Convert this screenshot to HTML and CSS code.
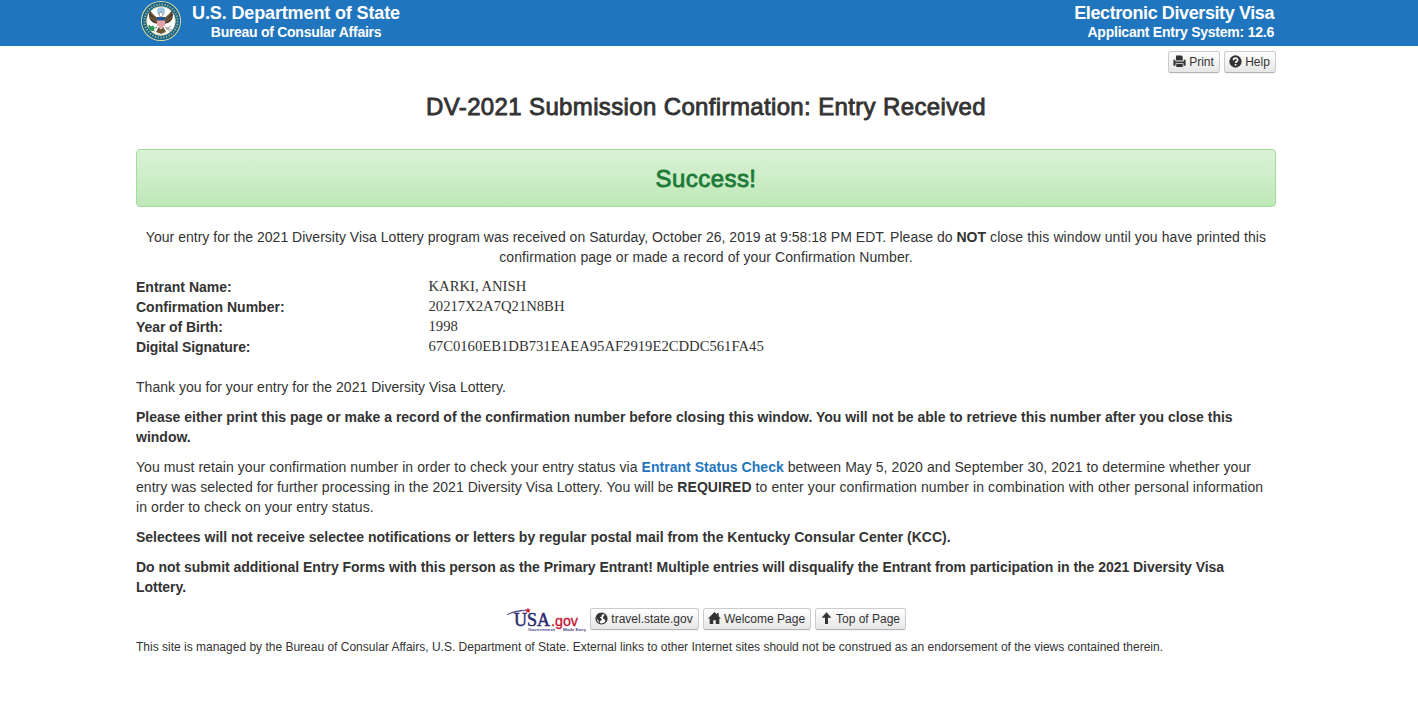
FILE: index.html
```html
<!DOCTYPE html>
<html lang="en">
<head>
<meta charset="utf-8">
<title>DV-2021 Submission Confirmation</title>
<link rel="stylesheet" href="styles.css">
</head>
<body>
<header class="banner">
  <div class="container banner-inner">
    <svg class="seal" viewBox="0 0 42 42" aria-hidden="true">
      <circle cx="21" cy="21" r="20" fill="#e9e29a"/>
      <circle cx="21" cy="21" r="19.1" fill="#0f5f92"/>
      <circle cx="21" cy="21" r="16.6" fill="none" stroke="#94b080" stroke-width="2.2" stroke-dasharray="1.4 1.4"/>
      <circle cx="21" cy="21" r="14.4" fill="#fff" stroke="#d6cd85" stroke-width=".7"/>
      <circle cx="21" cy="11.3" r="4" fill="#9cc8e8"/>
      <path d="M19 14q2-4 4 0l-1 3h-2z" fill="#fff" stroke="#77603b" stroke-width=".6"/>
      <path d="M18 18C14 16 12 12 10 11c-2 4-1 10 4 12l4 1zM24 18c4-2 6-6 8-7 2 4 1 10-4 12l-4 1z" fill="#4f3d2c"/>
      <path d="M11 13l6 7M10 17l7 5M31 13l-6 7M32 17l-7 5" stroke="#a88a50" stroke-width=".6"/>
      <path d="M19 26l-3 6 5 2 5-2-3-6z" fill="#6d583a"/>
      <path d="M17 17h8v6q0 4-4 6-4-2-4-6z" fill="#fff"/>
      <path d="M18 20v6M20 20v8M22 20v8M24 20v6" stroke="#d0444d" stroke-width="1"/>
      <path d="M17 17h8v3.500h-8z" fill="#215596"/>
      <path d="M17 27l-4 2M9 25l2 2 2-1 1 3-2 2-3-2zM12 30l3 1" fill="#2f9158" stroke="#2f9158" stroke-width="1"/>
      <path d="M25 27l7 3M26 29l5-3M26 28l5 4" stroke="#a5a5a5" stroke-width="1"/>
    </svg>
    <div class="brand">
      <div class="title dept">U.S. Department of State</div>
      <div class="subtitle bureau">Bureau of Consular Affairs</div>
    </div>
    <div class="system">
      <div class="title edv">Electronic Diversity Visa</div>
      <div class="subtitle aes">Applicant Entry System: 12.6</div>
    </div>
  </div>
</header>
<main class="container">
  <div class="tools">
    <a class="btn print"><svg class="icon" viewBox="0 0 14 14"><path d="M3.200 .5h6l1.300 1.300V6h-7.300zM.5 5.200h2V7h9V5.200h2V11.500h-2.200V9H2.700v2.500H.5zM3.500 9.800h7V13h-7z"/></svg><span>Print</span></a>
    <a class="btn help"><svg class="icon" viewBox="0 0 14 14"><circle cx="7" cy="7" r="6.600"/><path d="M4.800 5.600C4.800 2.600 9.300 2.700 9.300 5.300 9.300 7 7.100 7 7.100 8.500M7.100 9.600v1.700" fill="none" stroke="#fff" stroke-width="1.800"/></svg><span>Help</span></a>
  </div>
  <h1 class="heading">DV-2021 Submission Confirmation: Entry Received</h1>
  <div class="alert"><span>Success!</span></div>
  <p class="received"><span class="r1">Your entry for the 2021 Diversity Visa Lottery program was received on Saturday, October 26, 2019 at 9:58:18 PM EDT. Please do <b>NOT</b></span><span class="r1-end"> close this window until you have printed this</span><br><span class="r2">confirmation page or made a record of your Confirmation Number.</span></p>
  <dl class="details">
    <dt>Entrant Name:</dt><dd>KARKI, ANISH</dd>
    <dt>Confirmation Number:</dt><dd>20217X2A7Q21N8BH</dd>
    <dt class="tight">Year of Birth:</dt><dd>1998</dd>
    <dt class="tight">Digital Signature:</dt><dd>67C0160EB1DB731EAEA95AF2919E2CDDC561FA45</dd>
  </dl>
  <p class="thanks">Thank you for your entry for the 2021 Diversity Visa Lottery.</p>
  <p class="strong s1">Please either print this page or make a record of the confirmation number before closing this window. You will not be able to retrieve this number after you close this<br>window.</p>
  <p class="retain"><span class="t1">You must retain your confirmation number in order to check your entry status via <a class="link">Entrant Status Check</a> between May 5, 2020 and September 30, 2021 to determine whether your</span><br><span class="t2">entry was selected for further processing in the 2021 Diversity Visa Lottery. You will be <b>REQUIRED</b></span><span class="t2-end"> to enter your confirmation number in combination with other personal information</span><br><span class="t3">in order to check on your entry status.</span></p>
  <p class="strong s2">Selectees will not receive selectee notifications or letters by regular postal mail from the Kentucky Consular Center (KCC).</p>
  <p class="strong s3">Do not submit additional Entry Forms with this person as the Primary Entrant! Multiple entries will disqualify the Entrant from participation in the 2021 Diversity Visa<br>Lottery.</p>
  <footer>
    <div class="links">
      <svg class="usagov" viewBox="0 0 80 24" role="img" aria-label="USA.gov">
        <path d="M1 6.800C7 3 13 1.800 23 2.300 14 3 8 4 1 6.800z" fill="#29296e" stroke="#29296e" stroke-width=".4"/>
        <path d="M22 -.500l.8 2 2.200.1-1.700 1.400.6 2.100-1.900-1.200-1.800 1.200.5-2.100L19 1.600l2.200-.1z" fill="#d3162f"/>
        <text class="usa" x="8" y="18.300" textLength="36" lengthAdjust="spacingAndGlyphs">USA</text>
        <text class="gov" x="45" y="18.300" textLength="27" lengthAdjust="spacingAndGlyphs">.gov</text>
        <text class="motto" x="22" y="22.700" textLength="27" lengthAdjust="spacingAndGlyphs">Government</text>
        <text class="motto" x="57" y="22.700" textLength="23" lengthAdjust="spacingAndGlyphs">Made Easy</text>
      </svg>
      <a class="btn travel"><svg class="icon" viewBox="0 0 14 14"><circle cx="7" cy="7" r="5.900" fill="#fff" stroke="#333" stroke-width="1.300"/><path d="M2 4l2-2 4-.7 1 1.200-2 .8.6 1.300L5 6l1.500.8 1 1.600-1.800 1.200L5 12 3.500 9 1.500 7zM10 3l2.500 2 .4 3-1.600 2L10 7.500 8.400 7 9 5z"/></svg><span>travel.state.gov</span></a>
      <a class="btn welcome"><svg class="icon" viewBox="0 0 14 14"><path d="M7 0l2.800 2.800V1.200h1.700v3.300L14 7.100h-1.800V13H8.400V9H5.600v4H1.800V7.100H0z"/></svg><span>Welcome Page</span></a>
      <a class="btn top"><svg class="icon" viewBox="0 0 14 14"><path d="M7 .3l5.300 6H8.600V13H5.400V6.300H1.700z"/></svg><span>Top of Page</span></a>
    </div>
    <p class="note">This site is managed by the Bureau of Consular Affairs, U.S. Department of State. External links to other Internet sites should not be construed as an endorsement of the views contained therein.</p>
  </footer>
</main>
</body>
</html>
```
FILE: styles.css
```css
* { box-sizing: border-box; }
body {
  margin: 0;
  background: #fff;
  color: #333;
  font: 14px/20px "Liberation Sans", Arial, sans-serif;
}
p { margin: 0 0 10px; white-space: nowrap; }
.container { width: 1140px; margin-left: 136px; }
.banner { height: 46px; background: #1f76be; color: #fff; }
.banner-inner { display: flex; align-items: flex-start; }
.seal { width: 42px; height: 42px; margin-left: 4px; flex: none; }
.brand { margin-left: 10px; width: 208px; padding-top: 3px; text-align: center; white-space: nowrap; }
.system { margin-left: auto; margin-right: 2px; padding-top: 3px; text-align: right; white-space: nowrap; }
.title { font-size: 18px; line-height: 20px; font-weight: 700; }
.subtitle { font-size: 14px; line-height: 19px; font-weight: 700; }
.dept { letter-spacing: -.13px; }
.edv { letter-spacing: -.4px; }
.bureau { letter-spacing: -.28px; }
.aes { letter-spacing: -.23px; }
.tools { display: flex; justify-content: flex-end; gap: 4px; padding-top: 5px; }
.btn {
  display: flex;
  align-items: center;
  justify-content: center;
  height: 22px;
  padding-right: 1px;
  border: 1px solid #ccc;
  border-bottom-color: #b3b3b3;
  border-radius: 3px;
  background: linear-gradient(#fff, #e6e6e6);
  box-shadow: 0 1px 1px rgba(0, 0, 0, .05);
  font-size: 12px;
  line-height: 20px;
  white-space: nowrap;
  gap: 3px;
}
.icon { width: 13px; height: 13px; fill: #333; flex: none; margin-bottom: 2px; }
.print, .help { width: 52px; }
.travel { width: 109px; }
.welcome { width: 108px; }
.top { width: 91px; }
.heading {
  margin: 14px 0 22px;
  font-size: 24px;
  line-height: 40px;
  font-weight: 400;
  letter-spacing: .36px;
  text-align: center;
  -webkit-text-stroke: .85px #333;
}
.alert {
  height: 58px;
  margin-bottom: 20px;
  border: 1px solid #a3dd9b;
  border-radius: 4px;
  background: linear-gradient(#daf2d7, #bfe8b8);
  color: #1d7b38;
  font-size: 24px;
  line-height: 58px;
  letter-spacing: .45px;
  text-align: center;
  -webkit-text-stroke: .85px #1d7b38;
}
.received { text-align: center; }
.r1 { letter-spacing: .018px; }
.r1-end { letter-spacing: .1px; }
.r2 { letter-spacing: .08px; }
.details { display: grid; grid-template-columns: 292.5px 1fr; margin: 0 0 20px; }
.details dt { font-weight: 700; }
.details .tight { letter-spacing: -.08px; }
.details dd { margin: 0; font: 14.66px/19px "Liberation Serif", "Times New Roman", serif; }
.thanks { letter-spacing: .025px; }
.strong { font-weight: 700; }
.s3 { letter-spacing: -.037px; }
.t1 { letter-spacing: .071px; }
.t2 { letter-spacing: .046px; }
.t2-end { letter-spacing: .1px; }
.t3 { letter-spacing: .09px; }
.link { color: #1f76be; font-weight: 700; letter-spacing: .03px; }
.links { display: flex; justify-content: center; gap: 4px; padding-top: 1px; }
.usagov { width: 80px; height: 24px; overflow: visible; }
.usa { font: 19px "Liberation Serif", serif; fill: #29296e; stroke: #29296e; stroke-width: .5px; }
.gov { font: 14.5px "Liberation Sans", sans-serif; fill: #c4122f; stroke: #c4122f; stroke-width: .3px; }
.motto { font: 700 3.6px "Liberation Sans", sans-serif; fill: #4b4b8e; }
.note { margin-top: 5px; font-size: 12px; }
```
